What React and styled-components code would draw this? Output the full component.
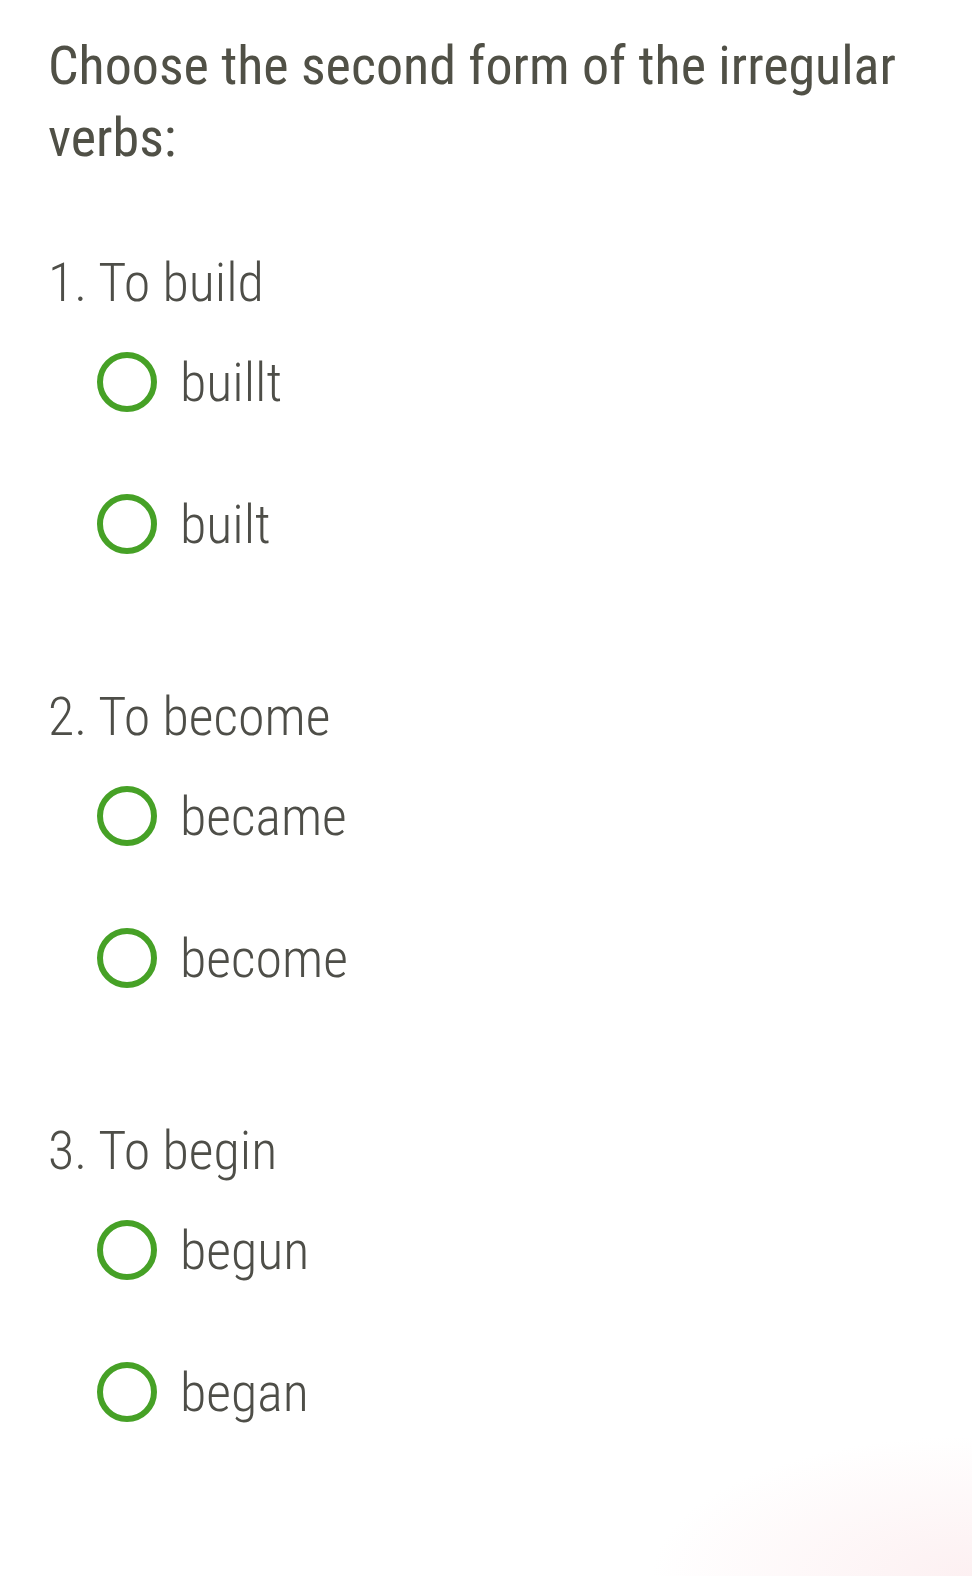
import React from "react";
import styled, { createGlobalStyle } from "styled-components";

const Global = createGlobalStyle`
  html, body { margin: 0; padding: 0; background: #ffffff; }
  body { font-family: "Roboto Condensed", Roboto, "Liberation Sans", sans-serif; }
`;

const Page = styled.div`
  min-height: 1576px;
  box-sizing: border-box;
  padding: 30px 40px 0 48px;
  background:
    radial-gradient(ellipse 320px 140px at 100% 100%, rgba(250, 225, 228, 0.5), rgba(255, 255, 255, 0) 100%),
    #ffffff;
`;

const Title = styled.h1`
  margin: 0 0 77px;
  font-family: "Roboto Condensed", Roboto, "Liberation Sans", sans-serif;
  font-weight: 400;
  font-size: 54px;
  line-height: 72px;
  color: #505046;
`;

const Section = styled.section`
  margin-bottom: 94px;
`;

const Question = styled.div`
  font-family: "Roboto Condensed", Roboto, "Liberation Sans", sans-serif;
  font-weight: 300;
  font-size: 54px;
  line-height: 64px;
  color: #4e4e48;
`;

const Options = styled.div`
  display: flex;
  flex-direction: column;
  gap: 8px;
  padding-left: 49px;
`;

const Option = styled.label`
  display: flex;
  align-items: center;
  height: 134px;
  gap: 23px;
  cursor: pointer;
`;

const Radio = styled.span`
  box-sizing: border-box;
  width: 60px;
  height: 60px;
  border-radius: 50%;
  border: 6px solid #46a126;
  flex: none;
`;

const OptionText = styled.span`
  font-family: "Roboto Condensed", Roboto, "Liberation Sans", sans-serif;
  font-weight: 300;
  font-size: 54px;
  color: #4e4e48;
`;

const data = [
  { q: "1. To build", opts: ["buillt", "built"] },
  { q: "2. To become", opts: ["became", "become"] },
  { q: "3. To begin", opts: ["begun", "began"] },
];

export default function App() {
  return (
    <>
      <Global />
      <Page>
        <Title>Choose the second form of the irregular verbs:</Title>
        {data.map((s) => (
          <Section key={s.q}>
            <Question>{s.q}</Question>
            <Options>
              {s.opts.map((o) => (
                <Option key={o}>
                  <Radio />
                  <OptionText>{o}</OptionText>
                </Option>
              ))}
            </Options>
          </Section>
        ))}
      </Page>
    </>
  );
}
